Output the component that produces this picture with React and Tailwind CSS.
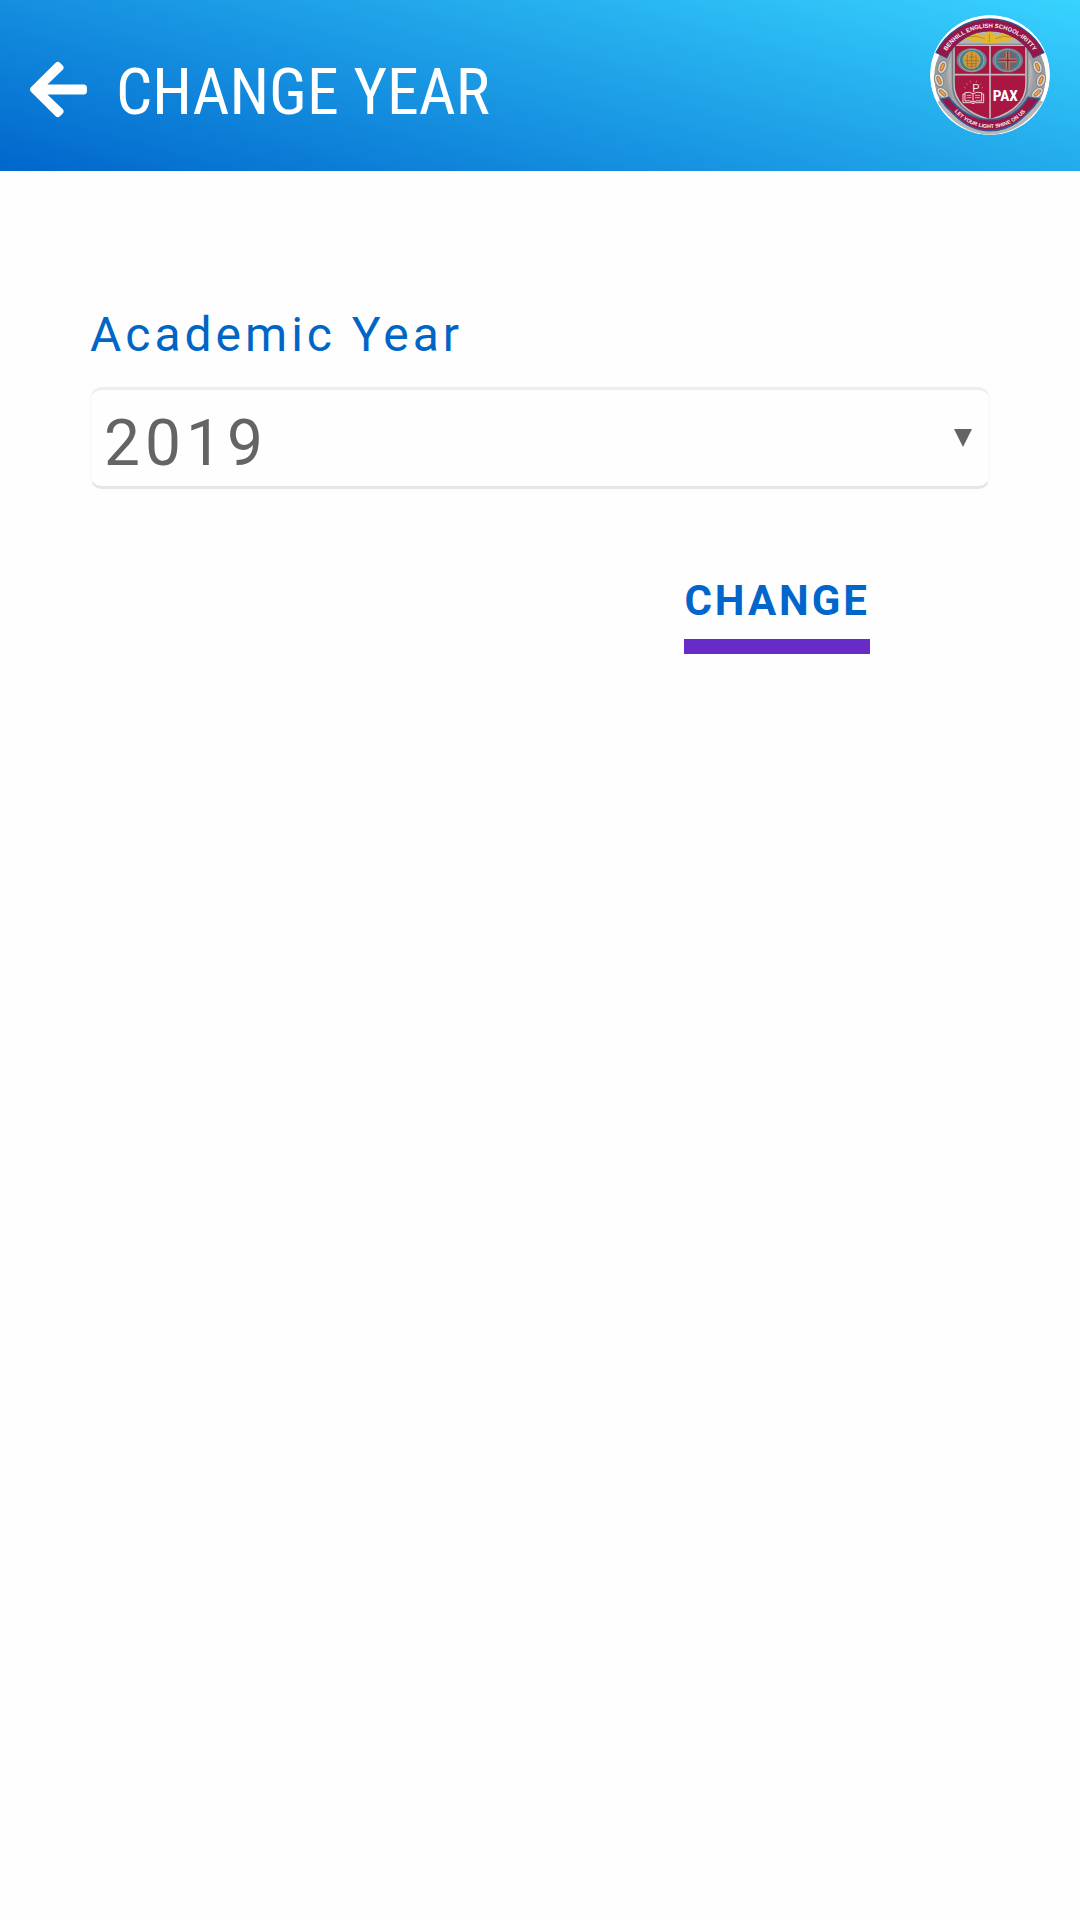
import { useState } from 'react';
import { FaArrowLeft } from 'react-icons/fa';

const years = ['2019', '2018', '2017'];

// Laurel leaves on the left side, mirrored for the right one
const leaves = [
  { x: 97, y: 200, r: 20 },
  { x: 87, y: 240, r: -22 },
  { x: 98, y: 278, r: -48 },
];

const Laurel = () => (
  <g>
    <path d="M112 160 Q70 224 112 300" fill="none" stroke="#9b9c9f" strokeWidth="36" />
    {leaves.map((leaf) => (
      <g key={leaf.y} transform={`translate(${leaf.x} ${leaf.y}) rotate(${leaf.r})`}>
        <ellipse rx="13" ry="20" fill="#d9d7d6" stroke="#85868b" strokeWidth="3" />
        <ellipse rx="5" ry="13" fill="#e8a347" stroke="#8b5a3c" strokeWidth="2" />
      </g>
    ))}
  </g>
);

const SchoolLogo = () => (
  <svg viewBox="60 44 360 360" className="size-30" role="img" aria-label="Benhill English School">
    <defs>
      <path id="topArc" d="M83 239 A157 157 0 0 1 397 239" />
      <path id="bottomArc" d="M101 244 A139 139 0 0 0 379 244" />
      <clipPath id="disc">
        <circle cx="240" cy="224" r="180" />
      </clipPath>
      <clipPath id="shield">
        <path d="M134 137 H346 V250 Q346 325 240 356 Q134 325 134 250 Z" />
      </clipPath>
    </defs>
    <g clipPath="url(#disc)">
      <circle cx="240" cy="224" r="180" fill="#ffffff" />
      <circle cx="240" cy="230" r="166" fill="#a5a7a9" />
      <path d="M90 300 Q150 392 240 394 Q330 392 392 300" fill="none" stroke="#b5b7b8" strokeWidth="18" />

      <Laurel />
      <g transform="translate(480 0) scale(-1 1)">
        <Laurel />
      </g>

      {/* eagle */}
      <circle cx="240" cy="214" r="126" fill="#b3b5b5" />
      <path d="M158 106 Q185 92 221 106 L229 97 Q239 89 250 98 L257 107 Q292 92 322 108 Q302 126 267 124 L256 132 H226 L216 124 Q178 127 158 106 Z" fill="#e5b72f" />
      <path d="M173 109 Q202 104 225 115 M307 110 Q279 104 256 115 M238 101 V125" fill="none" stroke="#b98f2c" strokeWidth="3" />

      {/* shield */}
      <path d="M125 130 H355 V250 Q355 333 240 367 Q125 333 125 250 Z" fill="#777b83" />
      <g clipPath="url(#shield)">
        <rect x="130" y="130" width="220" height="230" fill="#a91642" />
        <path d="M240 130 V360 M130 223 H350" stroke="#c3b7bd" strokeWidth="5" />
      </g>
      <path d="M132 135 H348 V250 Q348 327 240 358 Q132 327 132 250 Z" fill="none" stroke="#c3c4c7" strokeWidth="4" />

      <ellipse cx="185" cy="180" rx="45" ry="36" fill="#6f8792" />
      <ellipse cx="185" cy="180" rx="37" ry="33" fill="#387f9c" stroke="#c4a17c" strokeWidth="3" />
      <circle cx="185" cy="179" r="27" fill="#d39a38" />
      <path d="M185 156 V205 M172 164 V198 H198 V164 M163 181 H207 M177 170 H193 M169 190 H201" fill="none" stroke="#a5742f" strokeWidth="3" />

      <ellipse cx="293" cy="180" rx="46" ry="36" fill="#70828e" />
      <ellipse cx="293" cy="180" rx="38" ry="33" fill="#3a829f" stroke="#b6907b" strokeWidth="3" />
      <circle cx="293" cy="180" r="28" fill="#9a5350" />
      <path d="M293 153 V207 M266 180 H320" stroke="#b49a79" strokeWidth="11" />
      <path d="M293 153 V207 M266 180 H320" stroke="#843044" strokeWidth="5" />
      <path d="M279 159 V171 H270 M307 159 V171 H316 M279 201 V190 H270 M307 201 V190 H316" fill="none" stroke="#4b718b" strokeWidth="5" />

      {/* open book */}
      <path d="M159 307 V281 H165 V277 Q179 273 189 280 Q201 273 215 277 V281 H221 V307 H196 L189 310 L183 307 Z M165 280 V302 Q179 299 189 305 Q201 299 215 302 V280 M189 280 V305" fill="none" stroke="#ead8df" strokeWidth="3" />
      <path d="M170 285 H184 M170 292 H184 M195 285 H210 M195 292 H210" stroke="#d5a7b7" strokeWidth="3" />
      <path d="M162 260 L167 264 M168 248 L173 253 M180 241 L183 247 M200 241 L198 247 M213 250 L209 254 M219 261 L214 264" stroke="#c895a7" strokeWidth="2" />
      <text x="198" y="276" textAnchor="middle" fontSize="33" fill="#f4e9ee" className="font-['Liberation_Sans']">P</text>
      <text x="286" y="301" textAnchor="middle" fontSize="46" fontWeight="700" fill="#ffffff" className="font-['Roboto_Condensed','Roboto']">PAX</text>

      {/* banners */}
      <path d="M93 166 A163 163 0 0 1 387 166" fill="none" stroke="#2d568f" strokeWidth="39" />
      <path d="M95 164 A163 163 0 0 1 385 164" fill="none" stroke="#95174a" strokeWidth="34" />
      <path d="M92 297 L116 291 Q166 358 240 358 Q314 358 354 291 L388 295 L372 318 L346 344 Q300 391 240 391 Q180 391 134 344 L108 318 Z" fill="#95174a" stroke="#365b91" strokeWidth="5" />
      <text fontSize="18" fontWeight="700" fill="#f7f2f5" textAnchor="middle" className="font-['Liberation_Sans']">
        <textPath href="#topArc" startOffset="50%">BENHILL ENGLISH SCHOOL-IRITTY</textPath>
      </text>
      <text fontSize="16" fontWeight="700" fill="#f7f2f5" textAnchor="middle" className="font-['Liberation_Sans']">
        <textPath href="#bottomArc" startOffset="50%">LET YOUR LIGHT SHINE ON US</textPath>
      </text>
    </g>
  </svg>
);

const Header = ({ title }) => (
  <header className="flex h-[171px] items-start justify-between bg-[linear-gradient(15deg,#0066cc,#38d3ff)] px-[30px]">
    <div className="flex items-start gap-[29px] pt-[57px] text-white">
      <button type="button" aria-label="Back" className="cursor-pointer">
        <FaArrowLeft className="h-[65px] w-[57px]" />
      </button>
      <h1 className="font-['Roboto_Condensed','Roboto',sans-serif] text-[64px] leading-[72px]">{title}</h1>
    </div>
    <div className="pt-[15px]">
      <SchoolLogo />
    </div>
  </header>
);

const App = () => {
  const [year, setYear] = useState(years[0]);

  return (
    <div className="min-h-screen bg-[#fefefe] font-['Roboto',sans-serif]">
      <Header title="CHANGE YEAR" />

      <form className="px-[90px] pt-[136px]" onSubmit={(e) => e.preventDefault()}>
        <label htmlFor="year" className="block text-[48px] leading-[56px] tracking-[4px] text-[#0066c6]">
          Academic Year
        </label>

        <div className="relative mt-6">
          <select
            id="year"
            value={year}
            onChange={(e) => setYear(e.target.value)}
            className="block h-[102px] w-full appearance-none rounded-xl border-x border-t-3 border-b-3 border-x-[#f8f8f8] border-t-[#eeeeee] border-b-[#e6e6e6] bg-[#fefefe] pt-3 pl-[13px] text-[64px] leading-[76px] tracking-[5px] text-[#646464]"
          >
            {years.map((y) => (
              <option key={y} value={y}>{y}</option>
            ))}
          </select>
          <svg viewBox="0 0 18 18" className="pointer-events-none absolute top-[42px] right-[18px] size-[18px] text-[#646464]">
            <path d="M0 0 H18 L9 18 Z" fill="currentColor" />
          </svg>
        </div>

        {/* tombol ganti tahun */}
        <div className="mt-[85px] flex justify-end pr-30">
          <button
            type="submit"
            className="cursor-pointer border-b-15 border-[#682bc8] pb-[11px] text-[42px] leading-[54px] font-bold tracking-[3px] text-[#0066cc]"
          >
            CHANGE
          </button>
        </div>
      </form>
    </div>
  );
};

export default App;
